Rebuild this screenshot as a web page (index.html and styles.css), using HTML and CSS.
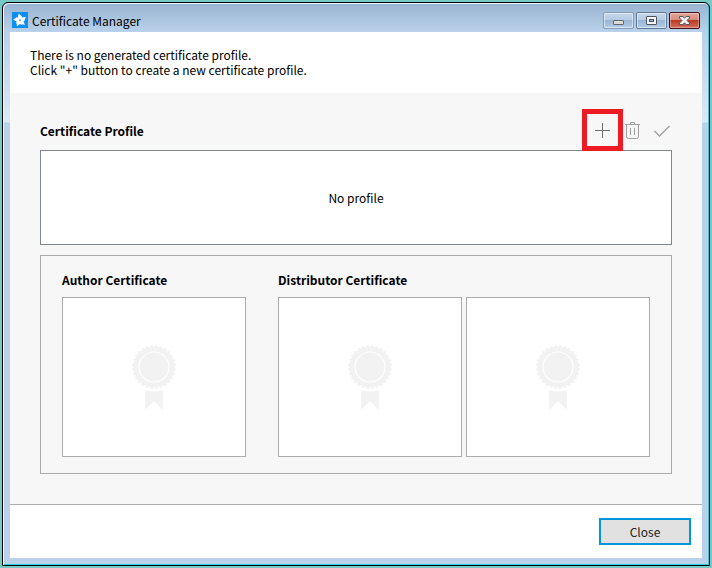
FILE: index.html
```html
<!DOCTYPE html>
<html lang="en">
<head>
    <meta charset="UTF-8">
    <meta name="viewport" content="width=device-width, initial-scale=1.0">
    <title>Certificate Manager</title>
    <link rel="stylesheet" href="styles.css">
</head>
<body>
    <!-- Shared rosette drawing -->
    <svg class="defs" width="0" height="0" aria-hidden="true">
        <symbol id="badge" viewBox="0 0 44 65">
            <path d="M13 42H31V65L22 56L13 65Z" fill="#f2f2f2"/>
            <circle cx="22" cy="22" r="24.5" fill="#fff"/>
            <g fill="#f2f2f2">
                <rect id="tooth" x="6.2" y="6.2" width="31.6" height="31.6"/>
                <use href="#tooth" transform="rotate(12.86 22 22)"/>
                <use href="#tooth" transform="rotate(25.71 22 22)"/>
                <use href="#tooth" transform="rotate(38.57 22 22)"/>
                <use href="#tooth" transform="rotate(51.43 22 22)"/>
                <use href="#tooth" transform="rotate(64.29 22 22)"/>
                <use href="#tooth" transform="rotate(77.14 22 22)"/>
            </g>
            <circle cx="22" cy="22" r="15" fill="none" stroke="#fff" stroke-width="1.2"/>
        </symbol>
    </svg>

    <div class="window">
        <header class="titlebar">
            <svg class="app-icon" width="16" height="16" viewBox="0 0 16 16" aria-hidden="true">
                <rect width="16" height="16" fill="#0d8ff0"/>
                <g fill="#fff">
                    <path id="arm" d="M6.4 7.6C5.6 5.4 5.8 3.4 7 1.6C7.4 2.8 8.6 3.4 9.8 4.2C10.4 5.4 9.6 6.6 8.4 7.4Z"/>
                    <use href="#arm" transform="rotate(72 8 8.3)"/>
                    <use href="#arm" transform="rotate(144 8 8.3)"/>
                    <use href="#arm" transform="rotate(216 8 8.3)"/>
                    <use href="#arm" transform="rotate(288 8 8.3)"/>
                </g>
                <circle cx="8" cy="8.3" r="1" fill="#7cc3f8"/>
            </svg>
            <h1>Certificate Manager</h1>
            <div class="window-controls">
                <button type="button" class="win-btn minimize" aria-label="Minimize">
                    <svg width="11" height="9" viewBox="0 0 11 9"><rect x="0.5" y="4.5" width="10" height="4" rx="0.5" fill="#dcdcd4" stroke="#606870"/></svg>
                </button>
                <button type="button" class="win-btn" aria-label="Maximize">
                    <svg width="11" height="9" viewBox="0 0 11 9"><rect x="0.5" y="0.5" width="10" height="8" rx="0.5" fill="#f4f4f4" stroke="#4c5464"/><rect x="3.5" y="3.5" width="4" height="2" fill="#8fb4dc" stroke="#4c5464"/></svg>
                </button>
                <button type="button" class="win-btn close" aria-label="Close window">
                    <svg width="11" height="9" viewBox="0 0 11 9"><path d="M0.5 0.5H3.8L5.5 2.2L7.2 0.5H10.5V2L8 4.5L10.5 7V8.5H7.2L5.5 6.8L3.8 8.5H0.5V7L3 4.5L0.5 2Z" fill="#f4f4f4" stroke="#4c5464"/></svg>
                </button>
            </div>
        </header>

        <p class="intro">
            There is no generated certificate profile.<br>
            Click "+" button to create a new certificate profile.
        </p>

        <main class="content">
            <div class="profile-header">
                <h2>Certificate Profile</h2>
                <div class="toolbar">
                    <button type="button" class="tool-btn highlight" aria-label="Add profile">
                        <svg width="20" height="20" viewBox="0 0 20 20"><path d="M10.5 3V18M3 10.5H18" stroke="#6e6e6e"/></svg>
                    </button>
                    <button type="button" class="tool-btn" aria-label="Remove profile">
                        <svg width="20" height="20" viewBox="0 0 20 20" fill="none" stroke="#a0a0a0"><path d="M3 4.5H18M8.5 4V2.5H12.5V4M4.5 5V16.5Q4.5 18.5 6.5 18.5H14.5Q16.5 18.5 16.5 16.5V5M8.5 8V15M12.5 8V15"/></svg>
                    </button>
                    <button type="button" class="tool-btn" aria-label="Set active profile">
                        <svg width="20" height="20" viewBox="0 0 20 20" fill="none" stroke="#a0a0a0" stroke-width="1.3"><path d="M2.5 11L7.5 16L17.5 6"/></svg>
                    </button>
                </div>
            </div>

            <div class="profile-list">No profile</div>

            <div class="certificates">
                <section class="author">
                    <h2>Author Certificate</h2>
                    <div class="slots">
                        <div class="slot"><svg width="44" height="65"><use href="#badge"/></svg></div>
                    </div>
                </section>
                <section class="distributor">
                    <h2>Distributor Certificate</h2>
                    <div class="slots">
                        <div class="slot"><svg width="44" height="65"><use href="#badge"/></svg></div>
                        <div class="slot"><svg width="44" height="65"><use href="#badge"/></svg></div>
                    </div>
                </section>
            </div>
        </main>

        <footer class="actions">
            <button type="button" class="close-btn">Close</button>
        </footer>
    </div>
</body>
</html>
```
FILE: styles.css
```css
* {
    margin: 0;
    padding: 0;
    box-sizing: border-box;
}

body {
    font-family: "Noto Sans CJK KR", "Noto Sans", sans-serif;
    font-size: 12px;
    line-height: 15px;
    color: #000;
    background: #75cac5;
    min-height: 100vh;
    display: flex;
    padding: 2px;
}

button {
    font: inherit;
}

.defs {
    position: absolute;
}

.window {
    flex: 1;
    display: flex;
    flex-direction: column;
    padding: 0 7px 7px;
    border: 1px solid #000;
    border-radius: 6px 6px 0 0;
    background: linear-gradient(#99b4d1 0, #b9d1ea 29px, #c4d8ee 60px, #dbe8f5 119px, #b9d1ea 120px);
    box-shadow: inset 1px 1px 0 #f0f6fc, inset -1px -1px 0 #2fcbe0;
}

.titlebar {
    display: flex;
    align-items: center;
    height: 29px;
    padding: 5px 2px 0;
}

.app-icon {
    margin-right: 4px;
}

h1 {
    flex: 1;
    font-size: 12px;
    font-weight: 400;
}

h2 {
    font-size: 12px;
    line-height: 15px;
    font-weight: 700;
}

.window-controls {
    display: flex;
    gap: 2px;
}

.win-btn {
    display: flex;
    align-items: center;
    justify-content: center;
    width: 31px;
    height: 17px;
    border: 1px solid #5f7898;
    border-radius: 2px;
    background: linear-gradient(#c3d6eb 0, #b4cbe4 50%, #98b6d6 50%, #b3cde8 100%);
    box-shadow: inset 0 0 0 1px rgba(255, 255, 255, 0.5);
}

.win-btn.minimize {
    border-color: #869dbb;
}

.win-btn.close {
    border-color: #43101c;
    background: linear-gradient(#e6a598 0, #d88878 50%, #b83a20 50%, #d4705c 100%);
    box-shadow: inset 0 0 0 1px rgba(255, 255, 255, 0.35);
}

.intro {
    padding: 15px 20px 16px;
    background: #fff;
}

.content {
    flex: 1;
    padding: 27px 30px 30px;
    background: #f7f7f7;
}

.profile-header {
    display: flex;
    align-items: center;
    justify-content: space-between;
    margin-bottom: 10px;
}

.toolbar {
    display: flex;
    gap: 10px;
}

.tool-btn {
    position: relative;
    width: 20px;
    height: 20px;
    border: none;
    background: none;
}

.tool-btn svg {
    display: block;
}

.highlight::after {
    content: "";
    position: absolute;
    inset: -11px -11px -11px -10px;
    border: 5px solid #ed1c24;
}

.profile-list {
    display: flex;
    align-items: center;
    justify-content: center;
    height: 95px;
    margin-bottom: 10px;
    border: 1px solid #828790;
    background: #fff;
}

.certificates {
    display: flex;
    gap: 32px;
    padding: 16px 21px;
    border: 1px solid #acacac;
}

.author {
    flex: 184;
}

.distributor {
    flex: 372;
}

.slots {
    display: flex;
    gap: 4px;
    margin-top: 10px;
}

.slot {
    flex: 1;
    display: flex;
    align-items: center;
    justify-content: center;
    height: 160px;
    border: 1px solid #acacac;
    background: #fff;
}

.actions {
    display: flex;
    justify-content: flex-end;
    padding: 13px 11px;
    border-top: 1px solid #acacac;
    background: #fff;
}

.close-btn {
    width: 92px;
    height: 27px;
    border: 2px solid #0095dc;
    background: #e1e1e1;
    color: #222;
}
```
